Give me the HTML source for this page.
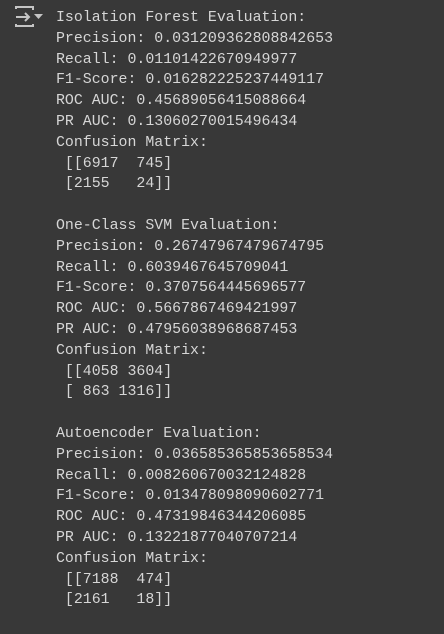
<!DOCTYPE html>
<html><head><style>
html,body{margin:0;padding:0;background:#383838;width:444px;height:634px;overflow:hidden}
pre{position:absolute;left:56px;top:8px;margin:0;font-family:"Liberation Mono",monospace;font-size:14.9px;line-height:20.8px;color:#d6d6d6}
svg{position:absolute;left:0;top:0}
</style></head><body>
<svg width="50" height="34" viewBox="0 0 50 34" fill="none" stroke="#c4c4c4" stroke-width="2">
<path d="M16 9V7h17v3"/><path d="M16 24v2h17v-2"/><path d="M16 17h13"/><path d="M25 13l4 4-4 4"/>
<path d="M34 14h9l-4.5 5z" fill="#c4c4c4" stroke="none"/>
</svg>
<pre>Isolation Forest Evaluation:
Precision: 0.031209362808842653
Recall: 0.01101422670949977
F1-Score: 0.016282225237449117
ROC AUC: 0.45689056415088664
PR AUC: 0.13060270015496434
Confusion Matrix:
 [[6917  745]
 [2155   24]]

One-Class SVM Evaluation:
Precision: 0.26747967479674795
Recall: 0.6039467645709041
F1-Score: 0.3707564445696577
ROC AUC: 0.5667867469421997
PR AUC: 0.47956038968687453
Confusion Matrix:
 [[4058 3604]
 [ 863 1316]]

Autoencoder Evaluation:
Precision: 0.036585365853658534
Recall: 0.008260670032124828
F1-Score: 0.013478098090602771
ROC AUC: 0.47319846344206085
PR AUC: 0.13221877040707214
Confusion Matrix:
 [[7188  474]
 [2161   18]]</pre>
</body></html>
